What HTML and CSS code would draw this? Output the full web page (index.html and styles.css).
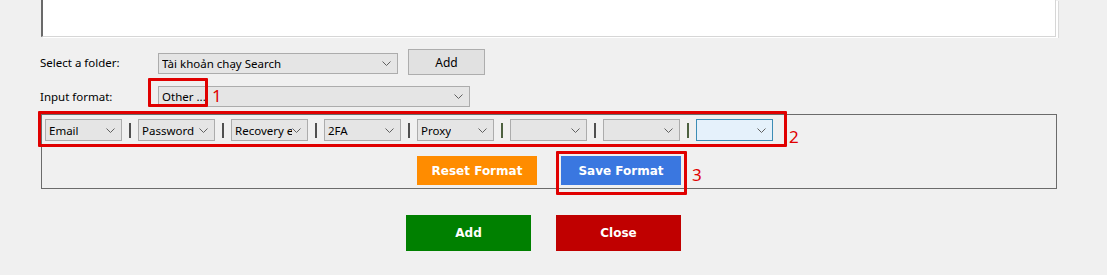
FILE: index.html
```html
<!DOCTYPE html>
<html lang="vi">
<head>
<meta charset="utf-8">
<title>Add accounts</title>
<link rel="stylesheet" href="styles.css">
</head>
<body>
<div class="window">
  <div class="output-box"></div>

  <div class="form-row row-folder">
    <span class="label">Select a folder:</span>
    <div class="combo combo-folder"><span class="combo-text">Tài khoản chạy Search</span><svg class="chev" width="9" height="5" viewBox="0 0 9 5"><path d="M0.5 0.5 L4.5 4.5 L8.5 0.5" fill="none" stroke="#606060" stroke-width="1"/></svg></div>
    <button class="btn-sys">Add</button>
  </div>

  <div class="form-row row-format">
    <span class="label">Input format:</span>
    <div class="combo combo-format"><span class="combo-text">Other ...</span><svg class="chev" width="9" height="5" viewBox="0 0 9 5"><path d="M0.5 0.5 L4.5 4.5 L8.5 0.5" fill="none" stroke="#606060" stroke-width="1"/></svg></div>
  </div>

  <div class="group">
    <div class="field-row">
      <div class="combo combo-field"><span class="combo-text">Email</span><svg class="chev" width="9" height="5" viewBox="0 0 9 5"><path d="M0.5 0.5 L4.5 4.5 L8.5 0.5" fill="none" stroke="#606060" stroke-width="1"/></svg></div>
      <span class="sep"></span>
      <div class="combo combo-field"><span class="combo-text">Password</span><svg class="chev" width="9" height="5" viewBox="0 0 9 5"><path d="M0.5 0.5 L4.5 4.5 L8.5 0.5" fill="none" stroke="#606060" stroke-width="1"/></svg></div>
      <span class="sep"></span>
      <div class="combo combo-field"><span class="combo-text clip">Recovery email</span><svg class="chev" width="9" height="5" viewBox="0 0 9 5"><path d="M0.5 0.5 L4.5 4.5 L8.5 0.5" fill="none" stroke="#606060" stroke-width="1"/></svg></div>
      <span class="sep"></span>
      <div class="combo combo-field"><span class="combo-text">2FA</span><svg class="chev" width="9" height="5" viewBox="0 0 9 5"><path d="M0.5 0.5 L4.5 4.5 L8.5 0.5" fill="none" stroke="#606060" stroke-width="1"/></svg></div>
      <span class="sep"></span>
      <div class="combo combo-field"><span class="combo-text">Proxy</span><svg class="chev" width="9" height="5" viewBox="0 0 9 5"><path d="M0.5 0.5 L4.5 4.5 L8.5 0.5" fill="none" stroke="#606060" stroke-width="1"/></svg></div>
      <span class="sep sep-green"></span>
      <div class="combo combo-field"><span class="combo-text"></span><svg class="chev" width="9" height="5" viewBox="0 0 9 5"><path d="M0.5 0.5 L4.5 4.5 L8.5 0.5" fill="none" stroke="#606060" stroke-width="1"/></svg></div>
      <span class="sep"></span>
      <div class="combo combo-field"><span class="combo-text"></span><svg class="chev" width="9" height="5" viewBox="0 0 9 5"><path d="M0.5 0.5 L4.5 4.5 L8.5 0.5" fill="none" stroke="#606060" stroke-width="1"/></svg></div>
      <span class="sep sep-green"></span>
      <div class="combo combo-field combo-focus"><span class="combo-text"></span><svg class="chev" width="9" height="5" viewBox="0 0 9 5"><path d="M0.5 0.5 L4.5 4.5 L8.5 0.5" fill="none" stroke="#606060" stroke-width="1"/></svg></div>
    </div>
    <div class="format-actions">
      <button class="btn-flat btn-orange">Reset Format</button>
      <button class="btn-flat btn-blue">Save Format</button>
    </div>
  </div>

  <div class="main-actions">
    <button class="btn-flat btn-big btn-green">Add</button>
    <button class="btn-flat btn-big btn-red">Close</button>
  </div>

  <div class="mark mark-1"></div>
  <span class="mark-num num-1">1</span>
  <div class="mark mark-2"></div>
  <span class="mark-num num-2">2</span>
  <div class="mark mark-3"></div>
  <span class="mark-num num-3">3</span>
</div>
</body>
</html>
```

FILE: styles.css
```css
html, body {
  margin: 0;
  padding: 0;
  background: #f0f0f0;
}
body {
  font-family: "Noto Sans", "Open Sans", sans-serif;
  font-size: 11.5px;
  color: #000;
}
.window {
  position: relative;
  width: 1107px;
  height: 275px;
  overflow: hidden;
}
.output-box {
  margin-left: 41px;
  width: 1012px;
  height: 36px;
  background: #fff;
  border-left: 2px solid #6a6a6a;
  border-right: 1px solid #d6d6d6;
  border-bottom: 1px solid #d6d6d6;
  box-shadow: 2px 1px 0 0 #fff, 3px 1px 0 0 #dadada;
}
.form-row {
  display: flex;
  align-items: flex-start;
  padding-left: 40px;
}
.row-folder {
  margin-top: 12px;
  height: 26px;
}
.row-format {
  margin-top: 11px;
  height: 21px;
}
.label {
  width: 118px;
  line-height: 21px;
}
.row-folder .label {
  margin-top: 3px;
}
.combo {
  display: flex;
  align-items: center;
  justify-content: space-between;
  box-sizing: border-box;
  height: 21px;
  background: #e5e5e5;
  border: 1px solid #acacac;
  padding: 0 6px 0 3px;
}
.combo-text {
  white-space: nowrap;
  overflow: hidden;
  line-height: 19px;
}
.chev {
  flex: none;
}
.combo-folder {
  width: 240px;
  margin-top: 4px;
}
.combo-format {
  width: 312px;
}
.btn-sys {
  margin-left: 10px;
  width: 77px;
  height: 26px;
  box-sizing: border-box;
  background: #e1e1e1;
  border: 1px solid #adadad;
  font-family: inherit;
  font-size: 12px;
  color: #000;
  padding: 0;
}
.group {
  margin: 7px 0 0 41px;
  width: 1016px;
  height: 75px;
  box-sizing: border-box;
  border: 1px solid #6b6b6b;
  padding: 4px 0 0 3px;
}
.field-row {
  display: flex;
  align-items: center;
  gap: 7px;
  height: 22px;
}
.combo-field {
  width: 77px;
  height: 22px;
}
.combo-focus {
  background: #e5f1fb;
  border-color: #3d8db5;
}
.sep {
  width: 2px;
  height: 15px;
  background: #505050;
}
.sep-green {
  background: #4d6140;
}
.format-actions {
  display: flex;
  justify-content: center;
  gap: 24px;
  margin-top: 15px;
  margin-left: -3px;
}
.btn-flat {
  border: none;
  padding: 0;
  color: #fff;
  font-family: "DejaVu Sans", Verdana, sans-serif;
  font-weight: bold;
  font-size: 12px;
  width: 120px;
  height: 29px;
}
.btn-orange { background: #ff8c00; }
.btn-blue { background: #3a77e0; }
.main-actions {
  display: flex;
  gap: 25px;
  margin: 26px 0 0 406px;
}
.btn-big {
  width: 125px;
  height: 36px;
  font-size: 12px;
}
.btn-green { background: #008000; }
.btn-red { background: #c00000; }

.mark {
  position: absolute;
  border: 3px solid #e00000;
  box-sizing: border-box;
  border-radius: 1px;
}
.mark-1 { left: 148px; top: 78px; width: 60px; height: 29px; }
.mark-2 { left: 38px; top: 111px; width: 749px; height: 36px; }
.mark-3 { left: 556px; top: 151px; width: 131px; height: 44px; }
.mark-num {
  position: absolute;
  color: #e00000;
  font-family: "Noto Sans", sans-serif;
  font-size: 17px;
  line-height: 20px;
}
.num-1 { left: 212px; top: 86px; }
.num-2 { left: 789px; top: 127px; }
.num-3 { left: 692px; top: 165px; }
```
